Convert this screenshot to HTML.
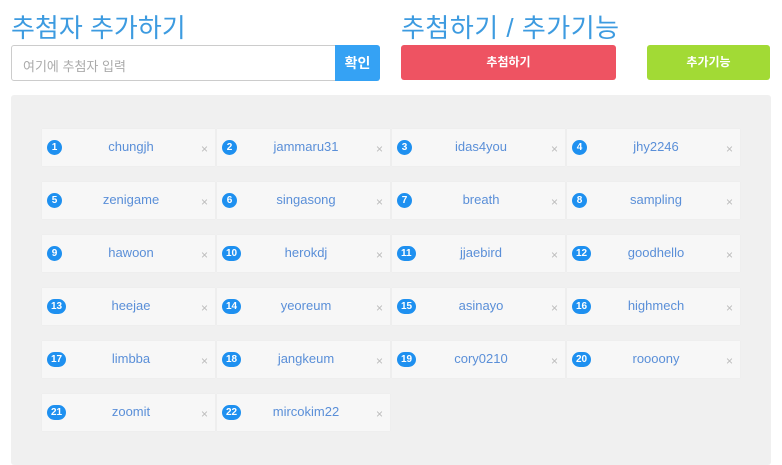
<!DOCTYPE html>
<html><head><meta charset="utf-8"><style>
*{margin:0;padding:0;box-sizing:border-box}
body{width:782px;height:454px;background:#fff;font-family:"Liberation Sans","Noto Sans CJK KR",sans-serif;position:relative;overflow:hidden}
.t{position:absolute;top:8px;font-size:26px;color:#3d9be0;font-weight:400}
.inp{position:absolute;left:11px;top:45px;width:325px;height:36px;border:1px solid #ccc;border-radius:3px 0 0 3px;font-size:13px;color:#aaa;padding:10px 11px}
.ok{position:absolute;left:335px;top:45px;width:45px;height:36px;background:#35a2f4;border-radius:0 3px 3px 0;color:#fff;font-size:14px;font-weight:bold;text-align:center;line-height:36px}
.b{position:absolute;top:45px;height:35px;border-radius:3px;color:#fff;font-size:12px;font-weight:bold;text-align:center;line-height:35px}
.panel{position:absolute;left:11px;top:95px;width:760px;height:370px;background:#f0f0f0;border-radius:3px}
.c{position:absolute;width:173px;height:37px;background:#f7f7f7;box-shadow:0 0 1px #e4e4e4}
.n{position:absolute;left:5px;top:11px;height:15px;min-width:15px;padding:0 4px;border-radius:8px;background:#1e90f0;color:#fff;font-size:10px;font-weight:bold;line-height:15px;text-align:center}
.nm{position:absolute;left:0;right:0;top:10px;text-align:center;font-size:13px;color:#5a8fd8;padding-left:5px}
.x{position:absolute;right:7px;top:13px;font-size:12px;color:#bbb}
</style></head><body>
<div class="t" style="left:11px;letter-spacing:0">추첨자 추가하기</div>
<div class="t" style="left:401px;letter-spacing:0.5px">추첨하기 / 추가기능</div>
<div class="inp">여기에 추첨자 입력</div>
<div class="ok">확인</div>
<div class="b" style="left:401px;width:215px;background:#ee5362">추첨하기</div>
<div class="b" style="left:647px;width:123px;background:#a2da35">추가기능</div>
<div class="panel"></div>
<div id="g"></div>
<script>
var names=["chungjh","jammaru31","idas4you","jhy2246","zenigame","singasong","breath","sampling","hawoon","herokdj","jjaebird","goodhello","heejae","yeoreum","asinayo","highmech","limbba","jangkeum","cory0210","roooony","zoomit","mircokim22"];
var h="";names.forEach(function(n,i){var x=42+(i%4)*175,y=129+Math.floor(i/4)*53;
h+='<div class="c" style="left:'+x+'px;top:'+y+'px"><span class="n">'+(i+1)+'</span><div class="nm">'+n+'</div><span class="x">×</span></div>';});
document.getElementById("g").innerHTML=h;
</script>
</body></html>
